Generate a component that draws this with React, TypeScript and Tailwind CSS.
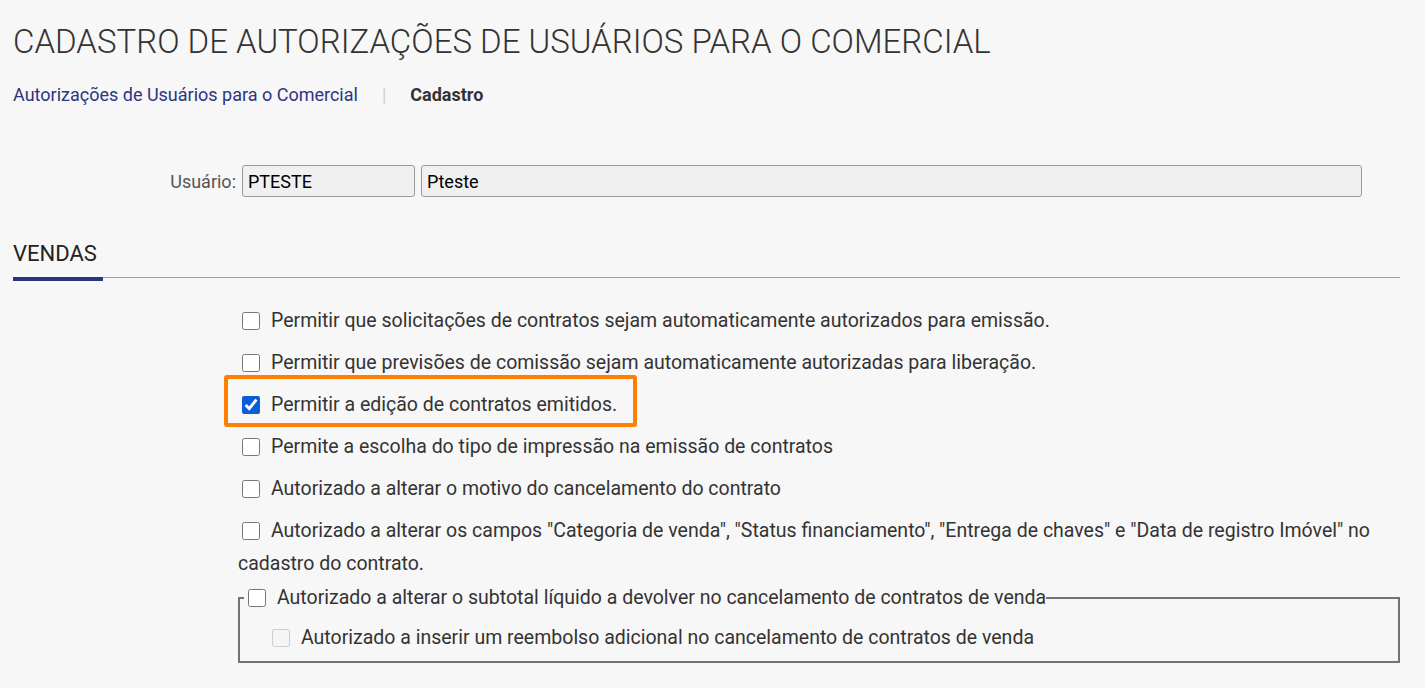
import React from 'react';

const rows = [
  'Permitir que solicitações de contratos sejam automaticamente autorizados para emissão.',
  'Permitir que previsões de comissão sejam automaticamente autorizadas para liberação.',
  'Permitir a edição de contratos emitidos.',
  'Permite a escolha do tipo de impressão na emissão de contratos',
  'Autorizado a alterar o motivo do cancelamento do contrato',
  'Autorizado a alterar os campos "Categoria de venda", "Status financiamento", "Entrega de chaves" e "Data de registro Imóvel" no cadastro do contrato.',
];

function Check({ checked = false, disabled = false }: { checked?: boolean; disabled?: boolean }) {
  return (
    <input
      type="checkbox"
      defaultChecked={checked}
      disabled={disabled}
      className="w-[18px] h-[18px] ml-[4px] mr-[11px] align-[-3px] accent-[#0b5ed7]"
    />
  );
}

export default function App() {
  return (
    <div
      className="min-h-[688px] bg-[#f7f7f7] pl-[13px] pr-[25px] text-[#333]"
      style={{ fontFamily: 'Roboto, "Noto Sans", sans-serif' }}
    >
      <h1 className="pt-[22px] text-[33px] leading-[40px] font-light text-[#333]">
        CADASTRO DE AUTORIZAÇÕES DE USUÁRIOS PARA O COMERCIAL
      </h1>

      <div className="mt-[21px] flex items-center text-[18px] leading-[24px]">
        <span className="text-[#2c3580]">Autorizações de Usuários para o Comercial</span>
        <span className="mx-[24px] text-[#cfcfcf]">|</span>
        <span className="font-bold text-[#333]">Cadastro</span>
      </div>

      <div className="mt-[58px] flex items-center">
        <label className="w-[225px] pr-[2px] text-right text-[18px] text-[#555]">Usuário:</label>
        <div className="ml-[4px] flex gap-[6px] flex-1 pr-[38px]">
          <div className="w-[173px] h-[32px] px-[5px] flex items-center bg-[#f0f0f0] border border-[#9a9a9a] rounded-[3px] text-[18px] text-black">
            PTESTE
          </div>
          <div className="flex-1 h-[32px] px-[5px] flex items-center bg-[#f0f0f0] border border-[#9a9a9a] rounded-[3px] text-[18px] text-black">
            Pteste
          </div>
        </div>
      </div>

      <div className="mt-[43px] border-b border-[#a0a0a0]">
        <div className="w-[90px] -mb-[4px] pb-[9px] border-b-4 border-[#2a3580] text-[22px] leading-[28px] text-[#222]">
          VENDAS
        </div>
      </div>

      <div className="ml-[225px] mt-[26px] text-[19.5px] leading-[33px] text-[#333]">
        {rows.map((text, i) => (
          <div key={i} className={i === rows.length - 1 ? 'mb-[1px]' : 'mb-[9px]'}>
            {i === 2 ? (
              <div className="relative">
                <span className="absolute left-[-14px] top-[-13px] w-[413px] h-[52px] border-4 border-[#ff8000] rounded-[3px] pointer-events-none" />
                <Check checked />
                {text}
              </div>
            ) : (
              <>
                <Check />
                {text}
              </>
            )}
          </div>
        ))}

        <fieldset className="border-2 border-[#737373] pl-[4px] pt-[7px] pb-[7px]">
          <legend className="leading-[33px]">
            <Check />
            Autorizado a alterar o subtotal líquido a devolver no cancelamento de contratos de venda
          </legend>
          <div className="pl-[24px]">
            <Check disabled />
            Autorizado a inserir um reembolso adicional no cancelamento de contratos de venda
          </div>
        </fieldset>
      </div>
    </div>
  );
}
